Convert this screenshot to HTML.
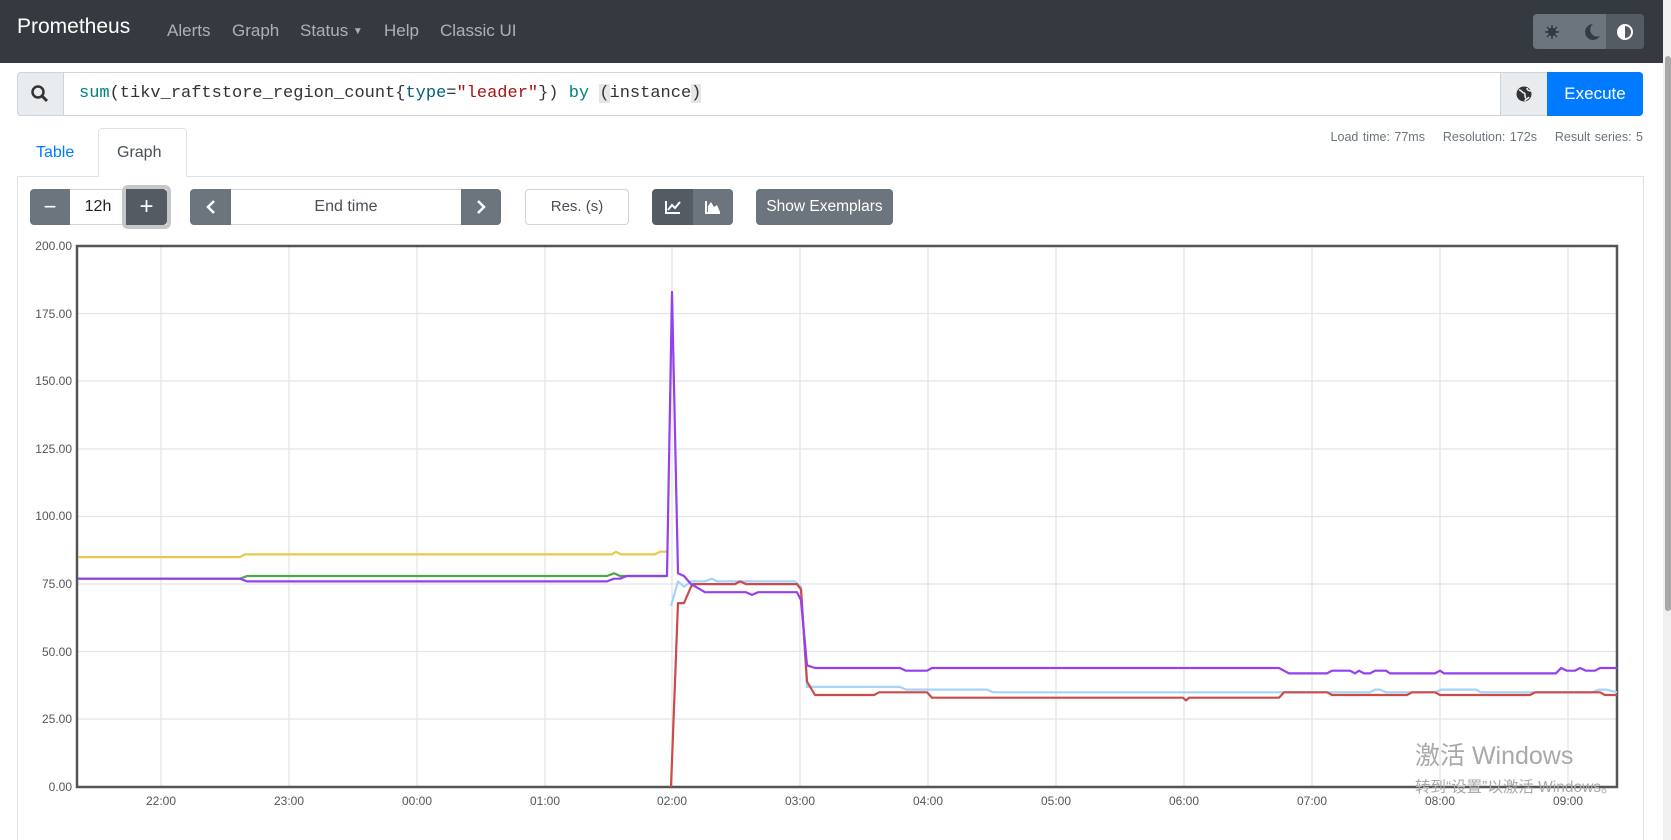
<!DOCTYPE html>
<html style="width:1671px;height:840px;overflow:hidden"><head><meta charset="utf-8">
<style>
*{box-sizing:border-box;margin:0;padding:0}
html,body{overflow:hidden}
body{width:1671px;height:840px;background:#fff;font-family:"Liberation Sans",Arial,sans-serif;position:relative;color:#212529}
.nav{position:absolute;left:0;top:0;width:1663px;height:63px;background:#343a40}
.brand{position:absolute;left:17px;top:15px;font-size:21px;color:#fff}
.nl{position:absolute;top:21px;font-size:17px;color:rgba(255,255,255,.6)}
.abs{position:absolute}
.btn{position:absolute;background:#6c757d;color:#fff;display:flex;align-items:center;justify-content:center}
.scroll{position:absolute;left:1663px;top:0;width:8px;height:840px;background:#f0f0f0}
.thumb{position:absolute;left:1665px;top:56px;width:6px;height:555px;background:#a8a8a8;border-radius:3px}
.mono{font-family:"Liberation Mono",monospace}
</style></head><body>
<div class="nav">
  <div class="brand">Prometheus</div>
  <div class="nl" style="left:167px">Alerts</div>
  <div class="nl" style="left:232px">Graph</div>
  <div class="nl" style="left:300px">Status <span style="font-size:10px;vertical-align:2px">▼</span></div>
  <div class="nl" style="left:384px">Help</div>
  <div class="nl" style="left:440px">Classic UI</div>
  <div class="abs" style="left:1533px;top:14px;width:111px;height:35px;border-radius:4px;background:#6c757d;overflow:hidden">
    <div class="abs" style="left:73px;top:0;width:38px;height:35px;background:#545b62"></div>
    <svg class="abs" style="left:0;top:0" width="111" height="35">
      <g stroke="#333a41" stroke-width="1.5" fill="none"><circle cx="19" cy="18" r="3.5" fill="#333a41"/><path d="M19 11v3M19 22v3M12 18h3M23 18h3M14 13l2 2M22 21l2 2M14 23l2-2M22 15l2-2"/></g>
      <path d="M60 10a8 8 0 1 0 7 12a7 7 0 0 1-7-12z" fill="#333a41"/>
      <circle cx="92" cy="18" r="7" fill="none" stroke="#fff" stroke-width="2"/><path d="M92 11a7 7 0 0 0 0 14z" fill="#fff"/>
    </svg>
  </div>
</div>
<div class="abs" style="left:17px;top:72px;width:1626px;height:44px;border:1px solid #ced4da;border-radius:4px"></div>
<div class="abs" style="left:17px;top:72px;width:47px;height:44px;background:#e9ecef;border:1px solid #ced4da;border-radius:4px 0 0 4px"></div>
<svg class="abs" style="left:30px;top:84px" width="20" height="20"><circle cx="8" cy="8" r="5.5" stroke="#333" stroke-width="2.5" fill="none"/><path d="M12 12l5 5" stroke="#333" stroke-width="3"/></svg>
<div class="abs mono" style="left:79px;top:84px;font-size:17px;color:#333;white-space:pre"><span style="color:#008080">sum</span>(tikv_raftstore_region_count{<span style="color:#00607a">type</span>=<span style="color:#a31515">"leader"</span>}) <span style="color:#008080">by</span> <span style="background:#e6e6e6">(</span>instance<span style="background:#e6e6e6">)</span></div>
<div class="abs" style="left:1500px;top:72px;width:48px;height:44px;background:#e9ecef;border:1px solid #ced4da"></div>
<svg class="abs" style="left:1515px;top:85px" width="18" height="18"><circle cx="9" cy="9" r="7.5" fill="#333"/><path d="M4 5c3 0 3 3 5 3s0 4 2 5M12 3c0 2 2 3 4 3M10 16c0-2 3-2 4-4" stroke="#e9ecef" stroke-width="1.6" fill="none"/></svg>
<div class="btn" style="left:1547px;top:72px;width:96px;height:44px;background:#007bff;border-radius:0 4px 4px 0;font-size:17px">Execute</div>
<div class="abs" style="right:28px;top:130px;font-size:12.5px;color:#6c757d;word-spacing:1px">Load time: 77ms &nbsp;&nbsp; Resolution: 172s &nbsp;&nbsp; Result series: 5</div>
<div class="abs" style="left:36px;top:144px;font-size:16px;color:#007bff">Table</div>
<div class="abs" style="left:98px;top:128px;width:89px;height:49px;border:1px solid #dee2e6;border-bottom:none;border-radius:4px 4px 0 0;background:#fff;z-index:2"></div>
<div class="abs" style="left:117px;top:144px;font-size:16px;color:#495057;z-index:3">Graph</div>
<div class="abs" style="left:17px;top:176px;width:1627px;height:664px;border:1px solid #dee2e6;border-bottom:none"></div>
<div class="btn" style="left:30px;top:189px;width:40px;height:36px;border-radius:4px 0 0 4px;font-size:22px">−</div>
<div class="abs" style="left:70px;top:189px;width:56px;height:36px;border-top:1px solid #ced4da;border-bottom:1px solid #ced4da;font-size:16px;text-align:center;line-height:34px">12h</div>
<div class="abs" style="left:122px;top:185px;width:49px;height:44px;border:4px solid #c5c7c9;border-radius:6px"></div>
<div class="btn" style="left:126px;top:189px;width:41px;height:36px;background:#545b62;border-radius:0 4px 4px 0;font-size:24px">+</div>
<div class="btn" style="left:190px;top:189px;width:41px;height:36px;border-radius:4px 0 0 4px"><svg width="12" height="16"><path d="M9 2L3 8l6 6" stroke="#fff" stroke-width="2.5" fill="none"/></svg></div>
<div class="abs" style="left:231px;top:189px;width:230px;height:36px;border-top:1px solid #ced4da;border-bottom:1px solid #ced4da;font-size:16px;text-align:center;line-height:34px;color:#495057">End time</div>
<div class="btn" style="left:461px;top:189px;width:40px;height:36px;border-radius:0 4px 4px 0"><svg width="12" height="16"><path d="M3 2l6 6-6 6" stroke="#fff" stroke-width="2.5" fill="none"/></svg></div>
<div class="abs" style="left:525px;top:189px;width:104px;height:36px;border:1px solid #ced4da;border-radius:4px;font-size:15px;text-align:center;line-height:34px;color:#495057">Res. (s)</div>
<div class="btn" style="left:652px;top:189px;width:41px;height:36px;background:#545b62;border-radius:4px 0 0 4px"><svg width="16" height="14"><path d="M1 1v12h14" stroke="#fff" stroke-width="2" fill="none"/><path d="M3 10l4-5 3 3 5-6" stroke="#fff" stroke-width="2" fill="none"/></svg></div>
<div class="btn" style="left:693px;top:189px;width:40px;height:36px;border-radius:0 4px 4px 0"><svg width="16" height="14"><path d="M1 1v12h14" stroke="#fff" stroke-width="2" fill="none"/><path d="M3 12V6l3-4 3 5 3-2 3 7z" fill="#fff"/></svg></div>
<div class="btn" style="left:756px;top:189px;width:137px;height:36px;border-radius:4px;font-size:15.5px">Show Exemplars</div>
<svg class="abs" style="left:0;top:0" width="1663" height="840" font-family="Liberation Sans, Arial, sans-serif" font-size="12" fill="#555">
<g stroke="#e4e4e4" stroke-width="1.3">
<path d="M77 313.5H1617M77 381H1617M77 449H1617M77 516.5H1617M77 584H1617M77 651.5H1617M77 719H1617"/>
<path d="M161 246V787M289 246V787M417 246V787M545 246V787M672 246V787M800 246V787M928 246V787M1056 246V787M1184 246V787M1312 246V787M1440 246V787M1568 246V787"/>
</g>
<rect x="77" y="246" width="1540" height="541" fill="none" stroke="#555" stroke-width="2.5"/>
<g text-anchor="end">
<text x="72" y="250">200.00</text><text x="72" y="318">175.00</text><text x="72" y="385">150.00</text><text x="72" y="453">125.00</text><text x="72" y="520">100.00</text><text x="72" y="588">75.00</text><text x="72" y="656">50.00</text><text x="72" y="723">25.00</text><text x="72" y="791">0.00</text>
</g>
<g text-anchor="middle">
<text x="161" y="805">22:00</text><text x="289" y="805">23:00</text><text x="417" y="805">00:00</text><text x="545" y="805">01:00</text><text x="672" y="805">02:00</text><text x="800" y="805">03:00</text><text x="928" y="805">04:00</text><text x="1056" y="805">05:00</text><text x="1184" y="805">06:00</text><text x="1312" y="805">07:00</text><text x="1440" y="805">08:00</text><text x="1568" y="805">09:00</text>
</g>
<g fill="none" stroke-width="2.2" stroke-linejoin="round">
<path stroke="#e8c84e" d="M78 557.1H240L245 554.4H612L616 551.7L621 554.4H655L660 551.7H667"/>
<path stroke="#4da74d" d="M78 578.7H240L247 576H607L614 573.3L620 576H667"/>
<path stroke="#a6d3f7" d="M671 605.8L678 581.4L684 586.8L691 581.4H705L712 578.7L717 581.4H795L801 586.8L807 686.9H900L906 689.6H987L993 692.3H1370L1375 689.6L1380 689.6L1386 692.3H1435L1441 689.6H1476L1481 692.3H1592L1599 689.6L1606 689.6L1617 692.3"/>
<path stroke="#cb4b4b" d="M671 787L678 603.1H684L691 586.8L693 584.1H735L740 581.4L746 584.1H797L801 589.5L807 681.5L815 695H874L879 692.3H927L932 697.7H1183L1186 700.4L1189 697.7H1279L1284 692.3H1327L1332 695H1407L1412 692.3H1435L1440 695H1530L1535 692.3H1600L1605 695H1617"/>
<path stroke="#9440ed" d="M78 578.7H240L247 581.4H607L614 578.7H620L627 576H667L672 292L678 573.3L684 576L691 584.1L705 592.2H746L752 594.9L758 592.2H797L801 600.3L807 665.3L815 668H900L906 670.7H927L932 668H1279L1284 670.7L1289 673.4H1327L1332 670.7H1350L1355 673.4L1359 670.7L1364 673.4H1370L1375 670.7H1386L1390 673.4H1435L1440 670.7L1444 673.4H1556L1561 668L1567 670.7H1575L1580 668L1586 670.7H1595L1600 668H1617"/>
</g>
<text x="1415" y="764" font-size="25" fill="#a9a9a9" font-family="Liberation Sans, Noto Sans CJK SC, sans-serif">激活 Windows</text>
<text x="1415" y="792" font-size="15.5" fill="#a9a9a9" font-family="Liberation Sans, Noto Sans CJK SC, sans-serif">转到“设置”以激活 Windows。</text>
</svg>
<div class="scroll"></div><div class="thumb"></div>
</body></html>
